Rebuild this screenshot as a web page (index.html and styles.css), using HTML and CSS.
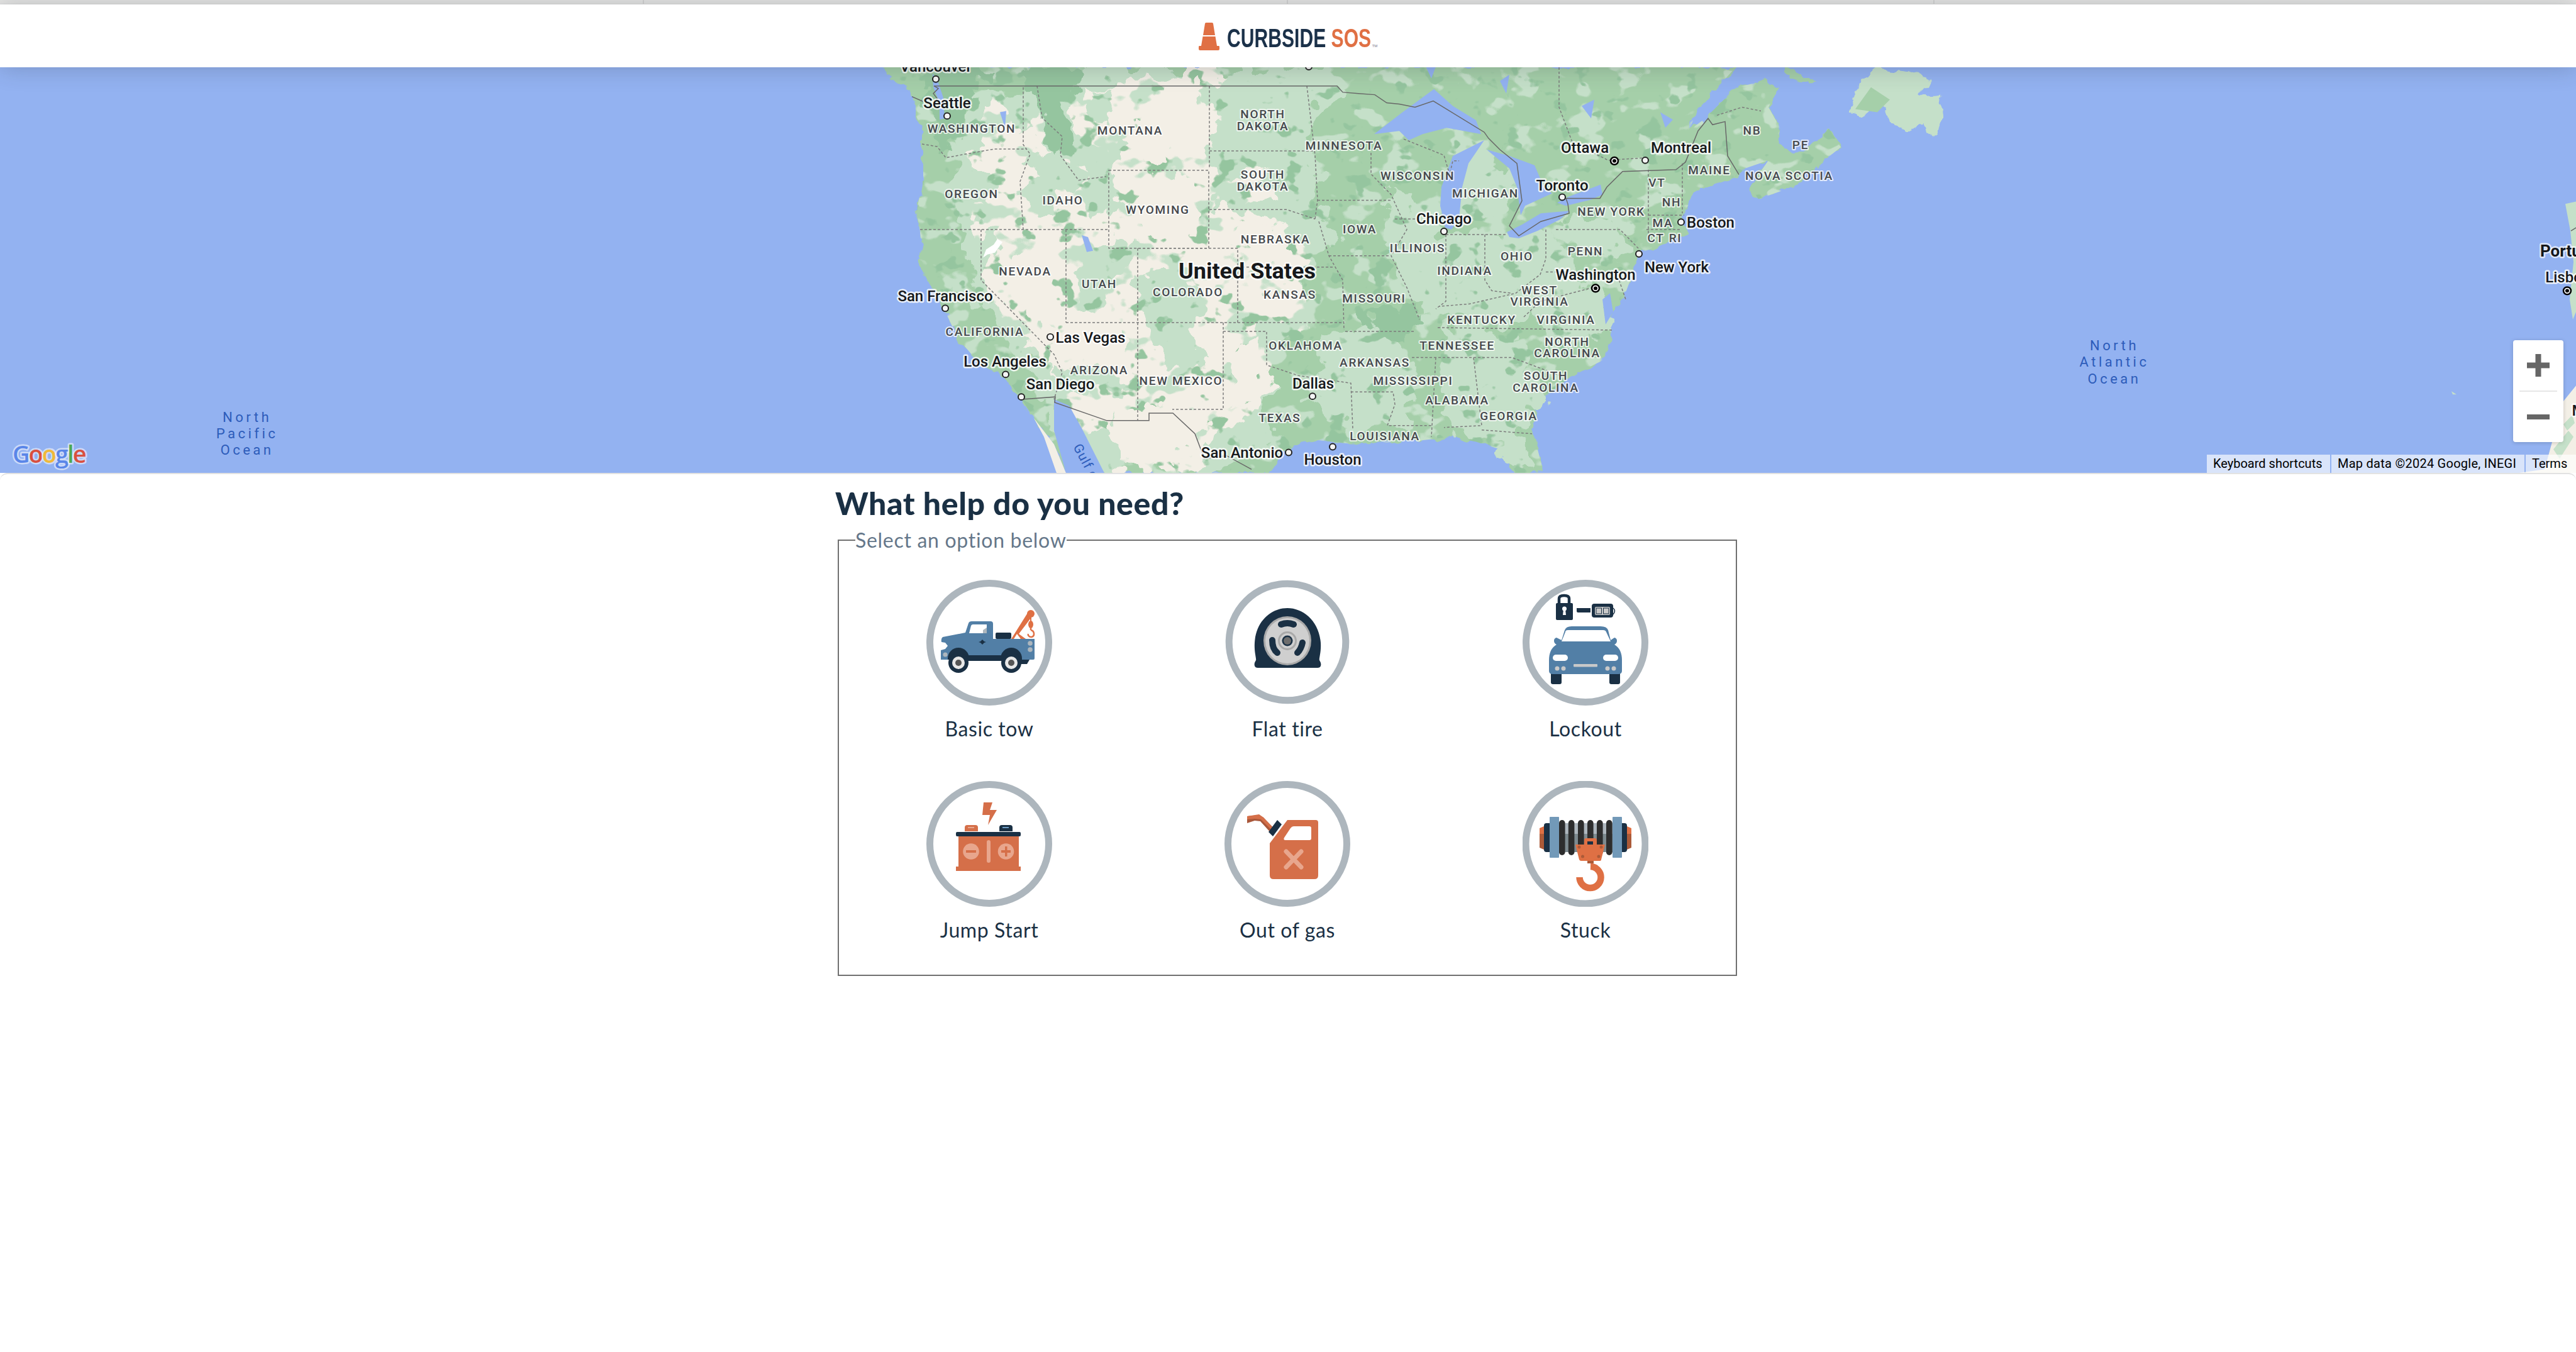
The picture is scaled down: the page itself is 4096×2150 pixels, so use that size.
FILE: index.html
```html
<!DOCTYPE html>
<html lang="en">
<head>
<meta charset="utf-8">
<title>Curbside SOS</title>
<link rel="stylesheet" href="styles.css">
</head>
<body>
<div class="tabstrip"><span></span><span></span><span></span><span></span></div>
<header class="topbar">
  <div class="logo">
    <svg class="cone" viewBox="0 0 33 44" width="33" height="44"><path class="orange" d="M10 1.500Q10 0 12 0H21Q23 0 23 1.500L26 20H7Z"/><path class="orange" d="M6.500 22H26.500L29 37H32Q33 37 33 38.500V42Q33 44 31 44H2Q0 44 0 42V38.500Q0 37 1 37H4Z"/></svg>
    <span class="logo-box"><span class="logo-word"><span class="logo-navy">CURBSIDE</span> <span class="logo-orange">SOS</span></span></span><span class="logo-tm">TM</span>
  </div>
</header>
<section class="map">
  <svg class="map-canvas" viewBox="0 107 4096 645" width="4096" height="645">
    <defs>
      <path id="land-shape" d="M1400 107L1420 127 1443 140 1453 163 1457 187 1468 210 1468 287 1457 340 1462 363 1465 393 1460 420 1485 466 1501 495 1523 542 1555 580 1600 606 1625 640 1644 670 1676 712 1695 758H2014L2040 725 2084 704 2155 712 2257 706 2308 700 2347 708 2385 720 2407 758H2455L2436 687 2445 644 2500 602 2551 576 2563 542 2560 508 2583 474 2608 406 2646 389 2685 376 2675 360 2681 334 2704 304 2761 283 2775 270 2812 257 2783 300 2796 319 2850 300 2901 257 2927 236 2908 206 2882 236 2850 245 2825 228 2831 206 2812 172 2828 142 2806 130 2761 140 2729 172 2710 191 2685 210 2700 175 2729 142 2761 107Z"/>
      <clipPath id="land-clip"><use href="#land-shape"/></clipPath>
      <filter id="rough-fine" filterUnits="userSpaceOnUse" x="1300" y="60" width="1900" height="760" color-interpolation-filters="sRGB">
        <feTurbulence type="fractalNoise" baseFrequency=".05" numOctaves="3" seed="4"/>
        <feDisplacementMap in="SourceGraphic" scale="16" xChannelSelector="R" yChannelSelector="G"/>
      </filter>
      <filter id="rough" filterUnits="userSpaceOnUse" x="1300" y="60" width="1900" height="760" color-interpolation-filters="sRGB">
        <feTurbulence type="fractalNoise" baseFrequency=".03" numOctaves="3" seed="9"/>
        <feDisplacementMap in="SourceGraphic" scale="60" xChannelSelector="R" yChannelSelector="G"/>
      </filter>
      <filter id="patches" filterUnits="userSpaceOnUse" x="1300" y="60" width="1900" height="760" color-interpolation-filters="sRGB">
        <feTurbulence type="fractalNoise" baseFrequency=".02 .028" numOctaves="3" seed="21"/>
        <feColorMatrix values="0 0 0 0 .773  0 0 0 0 .878  0 0 0 0 .788  16 0 0 0 -9.200"/>
      </filter>
      <filter id="patches-dark" filterUnits="userSpaceOnUse" x="1300" y="60" width="1900" height="760" color-interpolation-filters="sRGB">
        <feTurbulence type="fractalNoise" baseFrequency=".028 .036" numOctaves="3" seed="33"/>
        <feColorMatrix values="0 0 0 0 .584  0 0 0 0 .773  0 0 0 0 .624  16 0 0 0 -10.200"/>
      </filter>
    </defs>
    <rect class="ocean" x="0" y="107" width="4096" height="645"/>
    <g transform="matrix(1 0 0 .9928 0 -.28)">
      <g class="land-mid rough-fine">
        <use href="#land-shape"/>
        <path d="M2838 107L2885 130 2876 135 2838 117Z"/>
      </g>
      <g class="land-pale rough-fine">
        <path d="M2940 181L2959 130 2984 108 3048 117 3071 130 3048 155 3083 151 3090 189 3083 217 3061 213 3058 198 3029 210 3016 202 2991 172 2959 185Z"/>
      </g>
      <g class="land-mid">
        <path d="M2950 175L2975 140 3005 160 2985 180Z"/>
      </g>
      <g class="land-pale">
        <path d="M4079 327L4096 323V500L4091 512 4086 480 4092 420 4087 370Z"/>
      </g>
      <g class="land-pale rough">
        <path d="M1930 107H2125L2130 138 2080 190 2090 250 2098 320 2120 380 2090 420 2065 540H1925L1900 300Z"/>
        <path d="M1520 230L1560 150 1640 140 1720 107H1930L1925 280 1810 400 1900 430 1930 560 2020 620 2020 720 1920 758H1720L1660 640 1620 560 1560 480 1530 410Z"/>
        <path d="M2200 300L2280 340 2300 380 2460 370 2520 420 2480 470 2400 520 2330 510 2260 500 2210 440Z"/>
        <path d="M2310 265L2340 240 2400 270 2410 320 2370 360 2320 350Z"/>
        <path d="M2100 540L2200 520 2260 590 2240 680 2150 690 2080 640Z"/>
        <path d="M2290 520L2420 540 2450 640 2420 700 2440 758H2408L2380 715 2300 690Z"/>
        <path d="M2430 440L2530 450 2560 520 2470 570 2440 520Z"/>
        <path d="M2480 350L2570 355 2595 400 2510 410Z"/>
      </g>
      <g class="land-beige rough">
        <path d="M1530 252L1566 235 1556 205 1578 165 1615 190 1640 205 1650 168 1660 238 1700 262 1730 255 1718 210 1700 175 1720 142 1770 150 1800 120 1850 125 1880 107H1950L1935 140 1915 150 1935 200 1920 250 1950 300 1925 335 2000 345 2060 372 2090 400 2068 450 2082 495 2068 532 2050 555 2024 572 2012 650 1945 695 1920 758H1738L1700 668 1676 600 1632 546 1580 483 1561 432 1578 400 1552 375 1546 335 1570 325 1590 300 1562 282Z"/>
        <path d="M1992 265L2030 275 2040 305 1990 320 1950 300Z"/>
      </g>
      <path class="land-beige" d="M3990 760L4046 752 4076 643 4096 618V760Z"/>
      <g class="land-pale">
        <path d="M4060 720L4084 690 4092 700 4070 735Z"/>
        <path d="M4076 680L4090 665 4094 678 4082 690Z"/>
      </g>
      <g class="land-pale rough">
        <path d="M1640 255L1690 240 1720 280 1690 330 1650 345 1628 300Z"/>
        <path d="M1640 160L1690 142 1705 170 1695 200 1660 220Z"/>
        <path d="M1725 220L1790 240 1760 285 1790 320 1745 360 1715 305Z"/>
        <path d="M1730 145L1770 155 1760 200 1725 190Z"/>
        <path d="M1770 380L1810 395 1760 470 1722 500 1712 440Z"/>
        <path d="M1810 440L1870 420 1920 470 1890 530 1920 570 1860 580 1820 530Z"/>
        <path d="M1530 390L1590 368 1590 395 1545 440Z"/>
        <path d="M1680 600L1740 580 1800 610 1790 630 1740 630 1690 625Z"/>
        <path d="M1725 690L1790 660 1780 758H1740Z"/>
        <path d="M1920 700L1990 665 1975 720 1940 758 1905 758Z"/>
        <path d="M2000 520L2050 505 2060 545 2025 565 1990 550Z"/>
      </g>
      <g clip-path="url(#land-clip)">
        <rect class="noise-pale" x="1400" y="107" width="1400" height="660"/>
        <rect class="noise-dark" x="1400" y="107" width="1400" height="660"/>
      </g>
      <g class="land-beige rough">
        <path d="M1600 430L1640 400 1680 420 1670 500 1690 540 1640 520Z"/>
        <path d="M1770 660L1870 640 1920 660 1890 730 1790 740 1760 700Z"/>
        <path d="M1840 280L1900 290 1905 370 1830 385 1790 340Z"/>
        <path d="M1860 140L1910 130 1905 230 1820 260 1810 200Z"/>
        <path d="M1960 560L2000 540 2000 630 1950 660Z"/>
        <path d="M1700 500L1780 500 1790 580 1720 590Z"/>
        <path d="M1960 350L2040 370 2050 440 1990 420Z"/>
      </g>
      <g class="land-dark rough">
        <path d="M1490 107L1570 107 1560 150 1530 200 1500 240 1484 240 1482 190 1460 170Z"/>
        <path d="M1630 107H1720L1710 145 1690 165 1705 200 1710 250 1680 258 1660 225 1650 170 1625 145Z"/>
        <path d="M2160 500L2210 480 2250 500 2240 540 2190 540Z"/>
      </g>
      <g class="water">
        <path d="M1483 118L1492 133 1500 157 1502 190 1494 192 1494 165 1484 140Z"/>
        <path d="M1676 640L1700 650 1722 690 1756 758H1695L1676 690Z"/>
        <path class="baja" d="M1644 670L1660 700 1680 758H1695L1676 712Z"/>
        <path d="M2185 215L2230 180 2280 143 2310 170 2347 193 2355 215 2300 205 2262 215 2240 225 2225 210Z"/>
        <path d="M2290 330L2292 300 2310 250 2340 235 2360 225 2335 262 2325 300 2320 350 2308 368 2298 365Z"/>
        <path d="M2364 240L2400 250 2440 265 2455 300 2468 310 2425 330 2418 345 2412 300 2400 270Z"/>
        <path d="M2396 372L2420 360 2450 342 2496 338 2480 352 2445 370 2415 382 2400 380Z"/>
        <path d="M2476 325L2495 315 2545 296 2548 312 2530 320 2490 330Z"/>
        <path d="M2267 107H2283L2276 126Z"/>
        <path d="M2640 180L2660 192 2648 205Z"/>
        <path d="M2565 500L2553 520 2548 480 2560 470Z"/>
        <path d="M1720 377L1730 380 1738 402 1728 404Z"/>
        <path d="M2515 170L2535 160 2530 190Z"/>
        <path d="M2385 130L2400 120 2395 150Z"/>
        <path d="M1590 180L1600 178 1598 205Z"/>
      </g>
      <path class="salt" d="M1563 413L1568 400 1580 392 1586 383 1594 388 1582 405 1570 408Z"/>
      <path class="land-pale" d="M3898 627L3906 632 3900 632Z"/>
      <g class="state-lines">
        <path d="M1466 231L1490 235 1504 253 1530 248 1581 239H1632"/>
        <path d="M1627 140V232L1638 247 1622 291 1627 368"/>
        <path d="M1463 368H1762"/>
        <path d="M1649 138L1657 189 1689 219 1686 249 1715 289 1759 283"/>
        <path d="M1763 273H1922V398H1763Z"/>
        <path d="M1923 138V270"/>
        <path d="M1923 242H2088"/>
        <path d="M1923 336H2046L2091 351"/>
        <path d="M2078 138L2091 249 2095 321 2091 351"/>
        <path d="M2095 321H2212"/>
        <path d="M1810 398H1968V517"/>
        <path d="M1968 428H2119"/>
        <path d="M2097 355L2113 410 2135 449 2137 529"/>
        <path d="M2113 410H2209"/>
        <path d="M1809 398V674"/>
        <path d="M1695 368V517"/>
        <path d="M1695 517H2135"/>
        <path d="M1560 368V449L1676 568 1689 597 1676 640"/>
        <path d="M1945 517V656H1864"/>
        <path d="M1945 531H2014V585L2065 602 2148 614 2151 687"/>
        <path d="M2139 531H2250"/>
        <path d="M2148 628H2215L2218 648 2206 682H2276"/>
        <path d="M2180 245V279L2212 312 2237 368 2212 410 2237 461 2257 512"/>
        <path d="M2218 351H2250"/>
        <path d="M2299 376V483L2283 495"/>
        <path d="M2361 376V449L2372 466 2404 470"/>
        <path d="M2299 376H2394"/>
        <path d="M2458 368V415L2449 440 2410 470 2337 487 2289 491"/>
        <path d="M2474 368H2576L2605 398"/>
        <path d="M2286 525L2563 529"/>
        <path d="M2245 573H2404L2481 602"/>
        <path d="M2283 573L2276 700"/>
        <path d="M2343 573L2356 682 2296 685"/>
        <path d="M2356 689L2436 695"/>
        <path d="M2675 262V342"/>
        <path d="M2621 272V381"/>
        <path d="M2621 345H2678"/>
        <path d="M2618 368H2672"/>
        <path d="M2479 108V172L2500 228 2557 257 2615 253"/>
        <path d="M2232 223L2296 249 2305 280 2310 258 2320 258"/>
        <path d="M2423 508L2449 483 2532 461"/>
        <path d="M2458 436H2570L2585 480"/>
        <path d="M2730 185L2770 172 2800 178"/>
      </g>
      <g class="country-lines">
        <path d="M1485 138H2126L2135 148 2160 150 2186 152 2205 165 2225 167 2250 172 2279 162 2360 212 2367 222 2385 240 2412 262 2420 322 2400 362 2415 378 2450 355 2495 342 2493 327 2490 318H2544L2555 300 2580 275 2665 272 2680 260 2700 210 2716 190 2723 200 2743 195 2747 250 2765 280"/>
        <path d="M1485 138L1492 142 1484 150 1490 158 1486 165"/>
        <path d="M1450 155L1468 163"/>
        <path d="M1625 640L1678 636 1677 645 1760 674H1827V662H1865L1900 695 1915 735 1950 730 1990 752"/>
        <path d="M4096 365L4088 370"/>
      </g>
      <g class="dots">
        <circle cx="1488" cy="127" r="5"/><circle cx="1506" cy="186" r="5"/><circle cx="1503" cy="494" r="5"/>
        <circle cx="1670" cy="540" r="5"/><circle cx="1599" cy="600" r="5"/><circle cx="1624" cy="636" r="5"/>
        <circle cx="2087" cy="635" r="5"/><circle cx="2049" cy="725" r="5"/><circle cx="2119" cy="716" r="5"/>
        <circle cx="2296" cy="371" r="5"/><circle cx="2616" cy="257" r="5"/><circle cx="2484" cy="316" r="5"/>
        <circle cx="2673" cy="356" r="5"/><circle cx="2606" cy="407" r="5"/><circle cx="2081" cy="107" r="5"/>
      </g>
      <g class="capitals">
        <circle cx="2567" cy="258" r="6"/><circle cx="2537" cy="462" r="6"/><circle cx="4082" cy="466" r="6"/>
      </g>
      <g class="capital-core">
        <circle cx="2567" cy="258" r="3"/><circle cx="2537" cy="462" r="3"/><circle cx="4082" cy="466" r="3"/>
      </g>
      <g class="city">
        <text x="1488" y="115">Vancouver</text><text x="1506" y="174">Seattle</text>
        <text x="1503" y="483">San Francisco</text><text x="1734" y="549">Las Vegas</text>
        <text x="1598" y="588">Los Angeles</text><text x="1686" y="624">San Diego</text>
        <text x="2088" y="623">Dallas</text><text x="1975" y="734">San Antonio</text>
        <text x="2119" y="745">Houston</text><text x="2296" y="359">Chicago</text>
        <text x="2520" y="245">Ottawa</text><text x="2673" y="245">Montreal</text>
        <text x="2484" y="305">Toronto</text><text x="2720" y="365">Boston</text>
        <text x="2666" y="436">New York</text><text x="2537" y="449">Washington</text>
        <text x="4083" y="453">Lisboa</text>
        <text x="4137" y="666">Morocco</text>
      </g>
      <g class="state">
        <text x="1545" y="213">WASHINGTON</text><text x="1797" y="216">MONTANA</text>
        <text x="2008" y="190">NORTH</text><text x="2008" y="209">DAKOTA</text>
        <text x="2137" y="240">MINNESOTA</text><text x="2254" y="288">WISCONSIN</text>
        <text x="2008" y="286">SOUTH</text><text x="2008" y="305">DAKOTA</text>
        <text x="1545" y="318">OREGON</text><text x="1690" y="328">IDAHO</text>
        <text x="1841" y="343">WYOMING</text><text x="2028" y="390">NEBRASKA</text>
        <text x="2162" y="374">IOWA</text><text x="2254" y="404">ILLINOIS</text>
        <text x="1630" y="441">NEVADA</text><text x="1748" y="462">UTAH</text>
        <text x="1889" y="475">COLORADO</text><text x="2051" y="479">KANSAS</text>
        <text x="2185" y="485">MISSOURI</text><text x="2329" y="440">INDIANA</text>
        <text x="2412" y="417">OHIO</text><text x="1566" y="538">CALIFORNIA</text>
        <text x="2076" y="560">OKLAHOMA</text><text x="2186" y="588">ARKANSAS</text>
        <text x="2317" y="560">TENNESSEE</text><text x="2356" y="519">KENTUCKY</text>
        <text x="2490" y="519">VIRGINIA</text><text x="2448" y="472">WEST</text>
        <text x="2448" y="490">VIRGINIA</text><text x="2492" y="554">NORTH</text>
        <text x="2492" y="572">CAROLINA</text><text x="2458" y="609">SOUTH</text>
        <text x="2458" y="628">CAROLINA</text><text x="2247" y="617">MISSISSIPPI</text>
        <text x="2317" y="648">ALABAMA</text><text x="2399" y="673">GEORGIA</text>
        <text x="2202" y="705">LOUISIANA</text><text x="1748" y="600">ARIZONA</text>
        <text x="1878" y="617">NEW MEXICO</text><text x="2035" y="676">TEXAS</text>
        <text x="2786" y="216">NB</text><text x="2863" y="239">PE</text>
        <text x="2718" y="279">MAINE</text><text x="2845" y="288">NOVA SCOTIA</text>
        <text x="2362" y="317">MICHIGAN</text><text x="2635" y="299">VT</text>
        <text x="2658" y="331">NH</text><text x="2562" y="346">NEW YORK</text>
        <text x="2644" y="364">MA</text><text x="2633" y="388">CT</text>
        <text x="2664" y="388">RI</text><text x="2521" y="409">PENN</text>
      </g>
      <text class="country" x="1983" y="446">United States</text>
      <text class="gulf" transform="translate(1706 716) rotate(62)">Gulf of</text>
    </g>
    <text class="country-small" x="4039" y="408">Portugal</text>
    <g class="sea">
      <text x="393" y="671">North</text><text x="393" y="697">Pacific</text><text x="393" y="723">Ocean</text>
      <text x="3362" y="557">North</text><text x="3362" y="583">Atlantic</text><text x="3362" y="610">Ocean</text>
    </g>
    <text class="google" x="20" y="736"><tspan class="g-blue">G</tspan><tspan class="g-red">o</tspan><tspan class="g-yellow">o</tspan><tspan class="g-blue">g</tspan><tspan class="g-green">l</tspan><tspan class="g-red">e</tspan></text>
  </svg>
  <div class="zoom-ctrl">
    <button class="zoom-btn" type="button" aria-label="Zoom in"><svg viewBox="0 0 36 36" width="36" height="36"><path class="zoom-mark" d="M13.500 0h9v13.500H36v9H22.500V36h-9V22.500H0v-9h13.500z"/></svg></button>
    <span class="zoom-sep"></span>
    <button class="zoom-btn" type="button" aria-label="Zoom out"><svg viewBox="0 0 36 36" width="36" height="36"><path class="zoom-mark" d="M0 14h36v8H0z"/></svg></button>
  </div>
  <div class="attrib">
    <span class="attrib-item attrib-keys">Keyboard shortcuts</span>
    <span class="attrib-item attrib-data">Map data ©2024 Google, INEGI</span>
    <span class="attrib-item attrib-terms">Terms</span>
  </div>
</section>
<main class="panel">
  <div class="container">
    <h1 class="title">What help do you need?</h1>
    <fieldset class="options">
      <legend class="options-legend">Select an option below</legend>
      <div class="options-grid">
        <button class="option" type="button">
          <svg class="option-icon" viewBox="0 0 200 200">
            <circle class="ring" cx="100" cy="100" r="94.500"/>
            <path class="crane" d="M135 94L162 51 169 57 147 86 158 94H150L144 86 139 94Z"/>
            <circle class="fill-orange" cx="166" cy="54" r="6"/>
            <path class="hook-line" d="M166 58V66"/>
            <ellipse class="fill-orange" cx="166" cy="71" rx="4" ry="6"/>
            <path class="hook-thin" d="M166 76V80M166 80C172 81 173 90 167 91 163 91 161 88 162 86"/>
            <rect class="fill-navy" x="110" y="84" width="25" height="10" rx="2"/>
            <path class="fill-steel" d="M26 91L62 84 67 69Q68 66 72 66H102Q106 66 106 70V94H172V125Q172 127 170 127H23V112L30 110 34 105 30 100 24 99Q23 93 26 91Z"/>
            <path class="fill-white" d="M68 85L71 73Q72 71 74 71H96V85Z"/>
            <path class="fill-grey" d="M90 85V80L96 76V85Z"/>
            <path class="fill-navy" d="M89 95L92 98 95 99 92 100 89 103 86 100 83 99 86 98Z"/>
            <circle class="fill-grey" cx="165" cy="101" r="3.800"/><circle class="fill-grey" cx="165" cy="111" r="3.800"/><circle class="fill-grey" cx="30" cy="119" r="3.600"/>
            <path class="fill-navy" d="M66 120H122V129H66Z"/>
            <path class="fill-navy" d="M148 127H164L160 134H148Z"/>
            <path class="fill-navy" d="M34 125A17 17 0 0 1 68 125V127H34Z"/>
            <path class="fill-navy" d="M118 125A17 17 0 0 1 152 125V127H118Z"/>
            <circle class="fill-navy" cx="51" cy="132" r="16"/><circle class="fill-lite" cx="51" cy="132" r="10"/><circle class="fill-dim" cx="51" cy="132" r="5"/>
            <circle class="fill-navy" cx="135" cy="132" r="16"/><circle class="fill-lite" cx="135" cy="132" r="10"/><circle class="fill-dim" cx="135" cy="132" r="5"/>
          </svg>
          <span class="option-label">Basic tow</span>
        </button>
        <button class="option" type="button">
          <svg class="option-icon" viewBox="0 0 200 200">
            <circle class="ring" cx="100" cy="99" r="92.800"/>
            <path class="fill-navy" d="M100 45C125 45 150 65 153 100 154 115 150 125 151 128 153 131 154 134 153 137Q152 140 148 140H53Q49 140 48 137C47 134 48 131 50 128 51 125 47 115 48 100 50 65 75 45 100 45Z"/>
            <ellipse class="wheel-outer" cx="100" cy="97" rx="38" ry="39"/>
            <ellipse class="wheel-face" cx="100" cy="97" rx="35" ry="36"/>
            <circle class="wheel-ring" cx="100" cy="97" r="13.500"/>
            <circle class="fill-navy" cx="100" cy="97" r="8.500"/>
            <circle class="fill-dim2" cx="100" cy="97" r="6"/>
            <path class="slot" d="M90 71Q100 67 110 71"/>
            <path class="slot" d="M76 96Q76 110 84 116"/>
            <path class="slot" d="M124 100Q122 110 116 116"/>
          </svg>
          <span class="option-label">Flat tire</span>
        </button>
        <button class="option" type="button">
          <svg class="option-icon" viewBox="0 0 200 200">
            <circle class="ring" cx="100" cy="100" r="94.500"/>
            <path class="shackle" d="M58 40V30Q58 25 66 25 74 25 74 30V40"/>
            <rect class="fill-navy" x="53" y="37" width="27" height="27" rx="2"/>
            <circle class="fill-white" cx="66.500" cy="46" r="3.500"/>
            <path class="fill-white" d="M65 47H68L69 56H64Z"/>
            <path class="fill-navy" d="M86 45H108V52H88Q86 52 86 50Z"/>
            <rect class="fill-navy" x="110" y="38" width="34" height="22" rx="4"/>
            <rect class="fill-lite2" x="115" y="43" width="24" height="13" rx="2"/>
            <rect class="fill-navy" x="116.500" y="44.500" width="9.500" height="10"/><rect class="fill-navy" x="128" y="44.500" width="9.500" height="10"/>
            <rect class="fill-lite2" x="117.500" y="45.500" width="7.500" height="8"/><rect class="fill-lite2" x="129" y="45.500" width="7.500" height="8"/>
            <path class="fob-ring" d="M144 45Q149 49 144 55"/>
            <rect class="fill-navy" x="45" y="146" width="17" height="20" rx="3"/>
            <rect class="fill-navy" x="138" y="146" width="17" height="20" rx="3"/>
            <path class="fill-steel" d="M62 96L67 80Q69 74 78 74H124Q134 74 136 80L140 96 146 92Q150 93 150 97 150 101 146 103 158 110 158 128V145Q158 150 152 150H48Q42 150 42 145V128Q42 110 54 103 50 101 50 97 50 93 54 92Z"/>
            <path class="fill-white" d="M62 98L68 83Q68 80 72 80H128Q132 80 133 83L140 98Z"/>
            <rect class="fill-white" x="48" y="119" width="24" height="10" rx="5"/><rect class="fill-white" x="128" y="119" width="24" height="10" rx="5"/>
            <rect class="fill-lite2" x="81" y="134" width="38" height="4.500" rx="1"/>
            <circle class="fill-lite2" cx="55" cy="141" r="3.500"/><circle class="fill-lite2" cx="65" cy="141" r="3.500"/><circle class="fill-lite2" cx="135" cy="141" r="3.500"/><circle class="fill-lite2" cx="145" cy="141" r="3.500"/>
          </svg>
          <span class="option-label">Lockout</span>
        </button>
        <button class="option" type="button">
          <svg class="option-icon" viewBox="0 0 200 200">
            <circle class="ring" cx="100" cy="100" r="94.500"/>
            <path class="fill-clay" d="M91 34H105L101 46H112L98 70 101 54H89Z"/>
            <path class="fill-clay" d="M61 80V74Q61 70 65 70H78Q82 70 82 74V80Z"/>
            <path class="fill-navy" d="M116 80V74Q116 70 120 70H133Q137 70 137 74V80Z"/>
            <rect class="fill-tint" x="66" y="73" width="10" height="2"/><rect class="fill-blue" x="121" y="73" width="10" height="2"/>
            <rect class="fill-navy" x="47" y="81" width="103" height="7" rx="2"/>
            <rect class="fill-clay" x="51" y="88" width="96" height="48"/>
            <rect class="fill-clay" x="47" y="136" width="103" height="7"/>
            <circle class="fill-tint" cx="71" cy="112" r="12.800"/><circle class="fill-tint" cx="126.500" cy="112" r="12.800"/>
            <rect class="fill-clay" x="63" y="110" width="16" height="4"/>
            <path class="fill-clay" d="M119 110H125V104H128.500V110H134V114H128.500V120H125V114H119Z"/>
            <rect class="fill-tint" x="96" y="94" width="6" height="36" rx="3"/>
          </svg>
          <span class="option-label">Jump Start</span>
        </button>
        <button class="option" type="button">
          <svg class="option-icon" viewBox="0 0 200 200">
            <circle class="ring" cx="100" cy="100" r="94.500"/>
            <path class="fill-clay-dark" d="M36 67L36 56 55 54 62 58 82 79 76 85 57 64 48 63Z"/>
            <path class="fill-clay" d="M36 56L55 53 62 58 82 79 79 82 58 61 48 60 36 61Z"/>
            <path class="fill-navy" d="M84 62L91 69 77 88 70 81Z"/>
            <path class="fill-clay" d="M100 62H145Q149 62 149 66V150Q149 156 143 156H78Q72 156 72 150V99Z"/>
            <path class="fill-white" d="M110 72H135Q138 72 138 75V91Q138 94 135 94H97Q93 94 95 90L105 75Q107 72 110 72Z"/>
            <path class="x-mark" d="M98 112L122 137M122 112L98 137"/>
          </svg>
          <span class="option-label">Out of gas</span>
        </button>
        <button class="option" type="button">
          <svg class="option-icon" viewBox="0 0 200 200">
            <circle class="ring" cx="100" cy="100" r="95"/>
            <path class="fill-orange" d="M27 75L34 72V84H27Z"/><path class="fill-rust" d="M27 84H34V109L27 106Z"/>
            <path class="fill-orange" d="M173 75L166 72V84H173Z"/><path class="fill-rust" d="M173 84H166V109L173 106Z"/>
            <rect class="fill-navy" x="34" y="67" width="12" height="46" rx="4"/><rect class="fill-navy" x="154" y="67" width="12" height="46" rx="4"/>
            <rect class="fill-drum" x="56" y="67" width="90" height="17"/><rect class="fill-drum2" x="56" y="84" width="90" height="29"/>
            <rect class="fill-flange" x="43" y="57" width="15" height="65" rx="1"/><rect class="fill-flange" x="143" y="57" width="15" height="65" rx="1"/>
            <rect class="fill-coil" x="58" y="62" width="9.600" height="56" rx="4.800"/><rect class="fill-coil" x="72.800" y="62" width="9.600" height="56" rx="4.800"/><rect class="fill-coil" x="88" y="62" width="9.600" height="56" rx="4.800"/><rect class="fill-coil" x="103" y="62" width="9.600" height="56" rx="4.800"/><rect class="fill-coil" x="118" y="62" width="9.600" height="56" rx="4.800"/><rect class="fill-coil" x="133" y="62" width="9.600" height="56" rx="4.800"/>
            <path class="hook" d="M108 136A17 17 0 1 1 90.500 153"/>
            <rect class="fill-rust" x="103" y="127" width="10" height="4"/>
            <path class="fill-orange" d="M98 101V94Q98 91 101 91H115Q118 91 118 94V101H131L125 125Q125 127 122 127H93Q91 127 90 125L84 101Z"/>
            <rect class="fill-navy" x="103" y="96" width="9" height="5"/>
            <circle class="fill-rust" cx="90" cy="105" r="2.500"/><circle class="fill-rust" cx="125" cy="105" r="2.500"/><circle class="fill-rust" cx="95.500" cy="120" r="2.500"/><circle class="fill-rust" cx="121" cy="120" r="2.500"/>
          </svg>
          <span class="option-label">Stuck</span>
        </button>
      </div>
    </fieldset>
  </div>
</main>
</body>
</html>
```
FILE: styles.css
```css
html, body { margin: 0; padding: 0; background: #fff; }
body { width: 4096px; height: 2150px; overflow: hidden; font-family: "Lato", "Liberation Sans", sans-serif; color: #1a3044; }

.tabstrip { display: grid; grid-template-columns: 1024px 1024px 1028px 1020px; height: 6px; background: #e4e4e3; border-bottom: 1px solid #d9d9d9; }
.tabstrip span { border-right: 2px solid #d2d2d2; }
.tabstrip span:last-child { border-right: 0; }

.topbar { position: relative; z-index: 2; height: 100px; display: flex; align-items: center; justify-content: center; background: #fff; box-shadow: 0 2px 36px rgba(40, 50, 60, .24); }
.logo { display: flex; align-items: flex-start; height: 44px; margin-top: 2px; }
.cone { display: block; margin-right: 12px; }
.orange { fill: #e07044; }
.logo-box { display: block; width: 230px; height: 44px; }
.logo-word { display: block; width: 344px; font-family: "Liberation Sans", sans-serif; font-weight: 700; font-size: 43px; line-height: 50px; white-space: pre; margin-top: -1px; transform: scaleX(.7); transform-origin: left top; }
.logo-navy { color: #1b3149; }
.logo-orange { color: #e07044; }
.logo-tm { font-family: "Liberation Sans", sans-serif; font-size: 6px; line-height: 6px; color: #778; margin-top: 34px; margin-left: 1px; }

.map { position: relative; height: 645px; overflow: hidden; }
.map-canvas { display: block; }
.ocean { fill: #93b2f1; }
.land-mid { fill: #a5cfa9; }
.land-pale { fill: #c5e0c9; }
.land-beige { fill: #f3efe6; }
.land-dark { fill: #95c59f; }
.rough { filter: url(#rough); }
.rough-fine { filter: url(#rough-fine); }
.noise-pale { filter: url(#patches); }
.noise-dark { filter: url(#patches-dark); }
.water { fill: #93b2f1; }
.water .baja { fill: #f3efe6; }
.salt { fill: #fff; }
.state-lines path { fill: none; stroke: #7c7c7c; stroke-width: 1.500; stroke-dasharray: 4 3; }
.country-lines path { fill: none; stroke: #686868; stroke-width: 1.500; }
.dots circle { fill: #f5f5f5; stroke: #222; stroke-width: 2; }
.capitals circle { fill: #fff; stroke: #000; stroke-width: 2.500; }
.capital-core circle { fill: #000; }
.city text { font-family: "Roboto", sans-serif; font-weight: 500; font-size: 24px; fill: #16181b; text-anchor: middle; paint-order: stroke; stroke: rgba(255, 255, 255, .8); stroke-width: 5px; stroke-linejoin: round; }
.state text { font-family: "Roboto", sans-serif; font-weight: 500; font-size: 19px; letter-spacing: 1.700px; fill: #45484d; text-anchor: middle; paint-order: stroke; stroke: rgba(255, 255, 255, .72); stroke-width: 4px; stroke-linejoin: round; }
.country { font-family: "Roboto", sans-serif; font-weight: 700; font-size: 36px; fill: #16181b; text-anchor: middle; paint-order: stroke; stroke: rgba(255, 255, 255, .8); stroke-width: 5px; stroke-linejoin: round; }
.country-small { font-family: "Roboto", sans-serif; font-weight: 700; font-size: 26px; fill: #16181b; paint-order: stroke; stroke: rgba(255, 255, 255, .7); stroke-width: 5px; stroke-linejoin: round; }
.sea text { font-family: "Roboto", sans-serif; font-size: 22px; letter-spacing: 4.500px; fill: #2d5cba; text-anchor: middle; }
.gulf { font-family: "Roboto", sans-serif; font-size: 21px; letter-spacing: 1px; fill: #2d5cba; }
.google { font-family: "Open Sans", sans-serif; font-weight: 600; font-size: 38px; letter-spacing: -2px; paint-order: stroke; stroke: rgba(255, 255, 255, .55); stroke-width: 5px; stroke-linejoin: round; }
.g-blue { fill: #5a86e8; }
.g-red { fill: #d9503f; }
.g-yellow { fill: #f0b93a; }
.g-green { fill: #4fa853; }

.zoom-ctrl { position: absolute; right: 20px; top: 434px; width: 80px; height: 162px; background: #fff; border-radius: 4px; box-shadow: 0 1px 6px rgba(0, 0, 0, .18); display: flex; flex-direction: column; align-items: center; }
.zoom-btn { flex: 1; width: 100%; padding: 0; border: 0; background: none; display: flex; align-items: center; justify-content: center; }
.zoom-sep { display: block; width: 60px; height: 2px; background: #e6e6e6; }
.zoom-mark { fill: #666; }

.attrib { position: absolute; right: 0; bottom: 0; display: flex; gap: 2px; height: 29px; font-family: "Roboto", sans-serif; font-size: 20px; line-height: 29px; color: #000; }
.attrib-item { display: block; background: rgba(255, 255, 255, .65); padding-left: 10px; white-space: nowrap; }
.attrib-keys { width: 186px; }
.attrib-data { width: 297px; letter-spacing: .26px; }
.attrib-terms { width: 70px; }

.panel { position: relative; z-index: 1; border-top: 2px solid #e2e2e2; border-radius: 12px 12px 0 0; background: #fff; }
.container { width: 1440px; margin: 0 auto; }
.title { margin: 0; padding-top: 16px; font-family: "Lato", sans-serif; font-weight: 900; font-size: 50px; line-height: 60px; letter-spacing: .6px; color: #1a3044; }
.options { margin: 9px 6px 0 4px; padding: 0 24px 0; border: 2px solid #707070; min-width: 0; }
.options-legend { padding: 0; margin-left: 2px; font-size: 32px; line-height: 40px; letter-spacing: .7px; color: #65778a; }
.options-grid { display: grid; grid-template-columns: repeat(3, 474px); justify-content: center; row-gap: 63px; margin: 0 -24px; padding-top: 43px; padding-bottom: 51px; }
.option { display: flex; flex-direction: column; align-items: center; padding: 0; border: 0; background: none; font: inherit; color: #1a3044; }
.option-icon { display: block; width: 200px; height: 200px; }
.option-label { display: block; margin-top: 17px; font-size: 32px; line-height: 40px; letter-spacing: .6px; color: #1a3044; }

.ring { fill: #fff; stroke: #adb6bd; stroke-width: 11; }
.fill-orange { fill: #df7044; }
.fill-navy { fill: #1a3044; }
.fill-steel { fill: #527fa6; }
.fill-white { fill: #fff; }
.fill-grey { fill: #adb6bd; }
.fill-lite { fill: #e8e8e8; }
.fill-lite2 { fill: #c9c9c9; }
.fill-dim { fill: #555; }
.fill-dim2 { fill: #6d6d6d; }
.fill-clay { fill: #d56f49; }
.fill-clay-dark { fill: #a9573a; }
.fill-tint { fill: #e8a68d; }
.fill-blue { fill: #6f9cc4; }
.fill-rust { fill: #ab5a38; }
.fill-drum { fill: #adb6bd; }
.fill-drum2 { fill: #7d8a8f; }
.fill-flange { fill: #7299b8; }
.fill-coil { fill: #2d2d2d; }
.crane { fill: #df7044; }
.hook-line { fill: none; stroke: #df7044; stroke-width: 2; }
.hook-thin { fill: none; stroke: #df7044; stroke-width: 2.500; }
.hook { fill: none; stroke: #df7044; stroke-width: 10.500; }
.wheel-outer { fill: #a9a9a9; }
.wheel-face { fill: #cfcfcf; }
.wheel-ring { fill: #cfcfcf; stroke: #a9a9a9; stroke-width: 3; }
.slot { fill: none; stroke: #1a3044; stroke-width: 10; stroke-linecap: round; }
.shackle { fill: none; stroke: #1a3044; stroke-width: 4.500; }
.fob-ring { fill: none; stroke: #1a3044; stroke-width: 1.500; }
.x-mark { fill: none; stroke: #e8a68d; stroke-width: 7; stroke-linecap: round; }
```
